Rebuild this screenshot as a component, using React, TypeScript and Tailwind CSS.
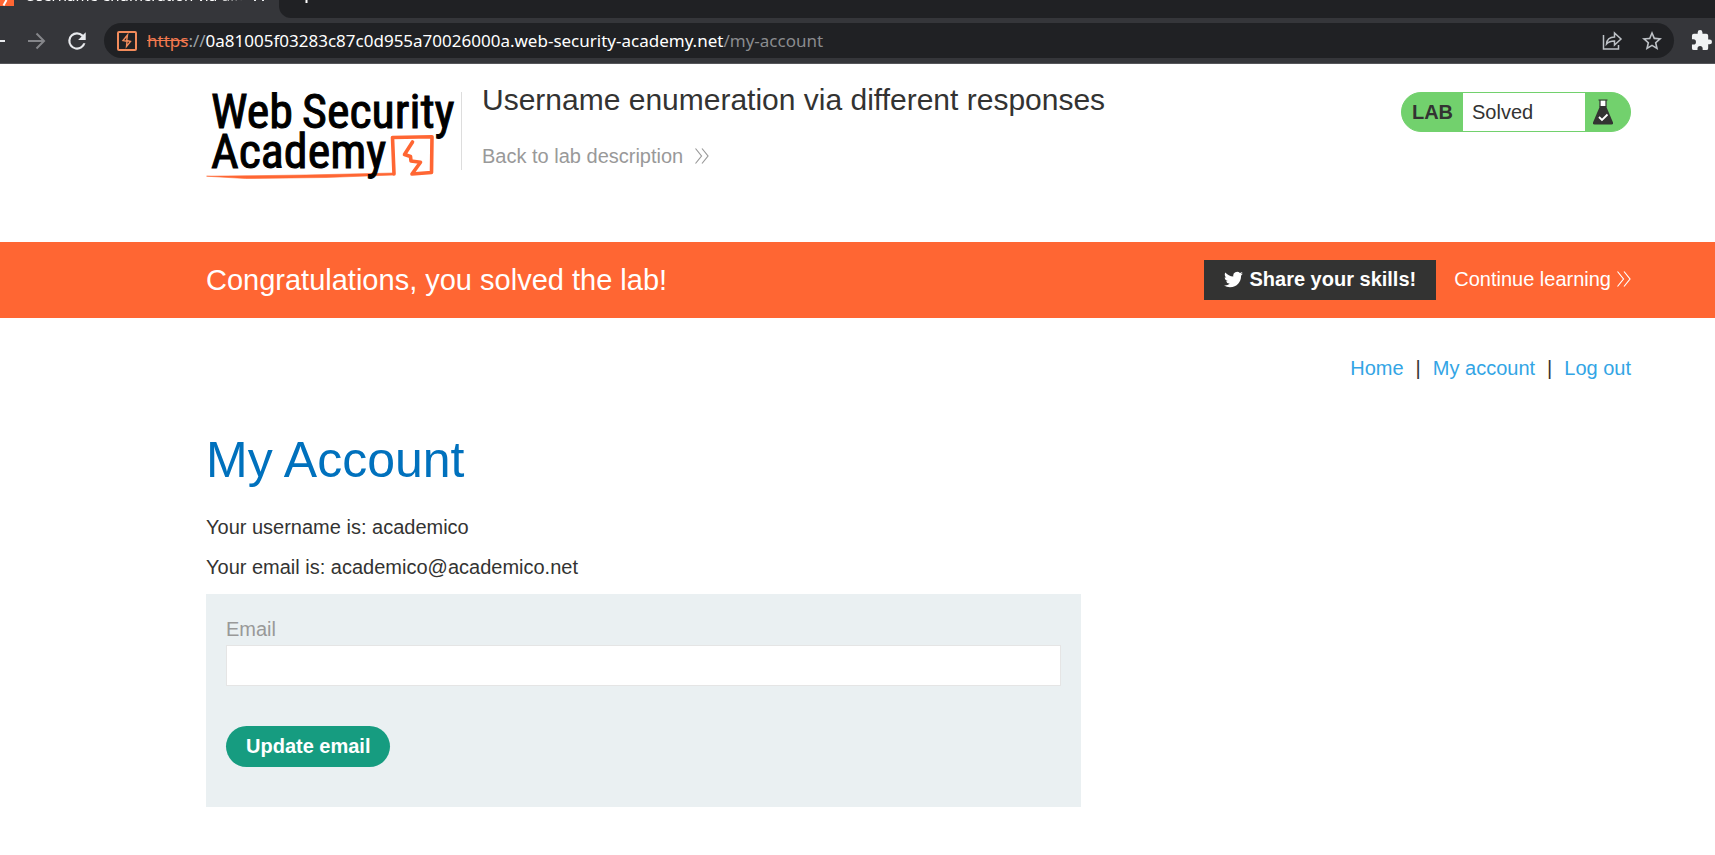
import { ReactNode } from "react";

function Chevrons({ className }: { className?: string }) {
  return (
    <svg className={className} width="14" height="18" viewBox="0 0 14 18" fill="none" stroke="currentColor" strokeWidth="1.2" aria-hidden="true">
      <path d="M.5 1.500 6.500 9l-6 7.500M7 1.500 13 9l-6 7.500" />
    </svg>
  );
}

function BrowserChrome() {
  return (
    <div className="bg-[#202124] font-['Noto_Sans','Open_Sans',sans-serif]">
      <div className="flex h-[18px] overflow-hidden bg-[#35363a]">
        <div className="flex w-[279px] items-end">
          <svg width="14" height="18" viewBox="0 0 14 18" aria-hidden="true" className="shrink-0">
            <path d="M0 0h14v6H0z" fill="#ff6633" />
            <path d="M6.500 0 3.500 5.500" stroke="#fff" strokeWidth="2" />
          </svg>
          <div className="relative h-[18px] flex-1">
            <span className="absolute bottom-[13px] left-[11px] w-[218px] overflow-hidden mask-r-from-90% text-[15px] leading-5 whitespace-nowrap text-white">
              Username enumeration via different responses
            </span>
            <svg className="absolute top-0 left-[240px]" width="12" height="2" viewBox="0 0 12 2" aria-hidden="true">
              <path d="M0 0h2v1H0zM8 0h2v1H8z" fill="#e8eaed" />
            </svg>
          </div>
        </div>
        <div className="flex-1 rounded-bl-[12px] bg-[#202124]">
          <svg width="50" height="18" viewBox="0 0 50 18" aria-hidden="true">
            <path d="M27.500 0v3" stroke="#fff" strokeWidth="2" />
          </svg>
        </div>
      </div>
      <div className="flex h-[46px] items-center border-b border-[#55565a] bg-[#35363a]">
        <button aria-label="Back" className="h-6 w-5">
          <svg width="20" height="24" viewBox="0 0 20 24" aria-hidden="true">
            <path d="M0 12h5" stroke="#e8eaed" strokeWidth="2" />
          </svg>
        </button>
        <button aria-label="Forward" className="ml-2 h-6 w-5">
          <svg width="20" height="24" viewBox="0 0 20 24" fill="none" stroke="#85868a" strokeWidth="2" aria-hidden="true">
            <path d="M0 12h15M8.500 4.500 16 12l-7.500 7.500" />
          </svg>
        </button>
        <button aria-label="Reload" className="ml-[17px] size-6">
          <svg width="24" height="24" viewBox="1 1 22 22" aria-hidden="true">
            <path d="M17.650 6.350A7.960 7.960 0 0 0 12 4a8 8 0 1 0 7.730 10h-2.080A6 6 0 1 1 12 6c1.660 0 3.140.69 4.220 1.780L13 11h7V4z" fill="#e8eaed" />
          </svg>
        </button>
        <div className="ml-[15px] flex h-[35px] flex-1 items-center rounded-full bg-[#202124] pr-[12px] pl-[13px]">
          <svg width="20" height="20" viewBox="0 0 20 20" fill="none" stroke="#f28b5b" aria-hidden="true" className="shrink-0">
            <rect x="1" y="1" width="18" height="18" rx="1" strokeWidth="2" />
            <path d="M10.500 4 6 9.500l4 .8-.5 5.200 4-5-3.800-1z" strokeWidth="1.400" />
          </svg>
          <p className="ml-[10px] flex-1 text-[17px] leading-6 whitespace-nowrap text-[#9aa0a6]">
            <span className="text-[#f2794f] line-through">https</span>://
            <span className="text-white">0a81005f03283c87c0d955a70026000a.web-security-academy.net</span>
            <span className="text-[#8a8b8e]">/my-account</span>
          </p>
          <button aria-label="Share this page">
            <svg width="22" height="22" viewBox="0 0 22 22" fill="none" stroke="#bdc1c6" strokeWidth="1.500" aria-hidden="true">
              <path d="M2.500 5v14h15v-4" />
              <path d="M5.500 14C6 9 9 7 13.500 7V3l6.500 6-6.500 6V11c-3.500 0-6 .8-8 3z" />
            </svg>
          </button>
          <button aria-label="Bookmark this page" className="ml-[19px]">
            <svg width="20" height="20" viewBox="2 2 20 20" fill="#bdc1c6" aria-hidden="true">
              <path d="m22 9.240-7.190-.62L12 2 9.190 8.630 2 9.240l5.460 4.730L5.820 21 12 17.270 18.180 21l-1.630-7.030zM12 15.400l-3.760 2.270 1-4.280-3.320-2.880 4.380-.38L12 6.100l1.710 4.040 4.380.38-3.320 2.880 1 4.280z" />
            </svg>
          </button>
        </div>
        <button aria-label="Extensions" className="mr-[3px] ml-[17px]">
          <svg width="21" height="21" viewBox="1 1 22 22" fill="#f1f3f4" aria-hidden="true">
            <path d="M20.500 11H19V7a2 2 0 0 0-2-2h-4V3.500a2.500 2.500 0 0 0-5 0V5H4a2 2 0 0 0-2 2v3.800h1.500a2.700 2.700 0 0 1 0 5.400H2V20a2 2 0 0 0 2 2h3.800v-1.500a2.700 2.700 0 0 1 5.400 0V22H17a2 2 0 0 0 2-2v-4h1.500a2.500 2.500 0 0 0 0-5z" />
          </svg>
        </button>
      </div>
    </div>
  );
}

function AcademyLogo() {
  return (
    <svg width="254" height="92" viewBox="0 0 254 92" role="img" aria-label="Web Security Academy" className="shrink-0">
      <g fill="none" stroke="#ff6633" strokeLinejoin="round" strokeLinecap="round">
        <path d="M1 84.200 40 83.800 100 83 188 81V83L120 85.500 40 86.500z" fill="#ff6633" strokeWidth=".6" />
        <path d="M188 82 186.500 45.500 226 44.800 225.500 80.500 206 82 214.500 70.200 205 69 204.500 64.500 198.500 62.500 206.500 50" strokeWidth="3.600" />
      </g>
      <g className="font-['Roboto_Condensed','Liberation_Sans_Narrow',sans-serif]" fontSize="48" fill="#000" stroke="#000" strokeWidth="1">
        <text x="5" y="36">Web</text>
        <text x="96" y="36">Security</text>
        <text x="5" y="76">Academy</text>
      </g>
    </svg>
  );
}

function LabStatus() {
  return (
    <div className="flex h-10 w-[230px] items-stretch overflow-hidden rounded-full border border-[#72d16d] bg-[#72d16d]">
      <span className="flex w-[61px] items-center justify-center font-bold">LAB</span>
      <span className="flex flex-1 items-center bg-white pl-[9px]">Solved</span>
      <span className="flex w-[45px] items-center pl-2">
        <svg width="20" height="26" viewBox="0 0 20 26" aria-hidden="true">
          <path d="M7 1.500h6v7H7z" fill="#fff" />
          <path d="M5.500 1h9M7 1v7M13 1v7" stroke="#333332" strokeWidth="1.200" />
          <path d="M7 7h6l7 16.500a1.600 1.600 0 0 1-1.500 2h-17A1.600 1.600 0 0 1 0 23.500z" fill="#333332" />
          <path d="m6 18 3 3 5.500-5.500" fill="none" stroke="#fff" strokeWidth="1.800" />
        </svg>
      </span>
    </div>
  );
}

function NavLink({ children }: { children: ReactNode }) {
  return <a href="#" className="text-[#33a5e5]">{children}</a>;
}

export default function App() {
  return (
    <div className="min-h-screen bg-white font-['Liberation_Sans',Arial,sans-serif] text-[20px] leading-[30px] text-[#333332]">
      <BrowserChrome />
      <header className="flex h-[178px] pr-[84px] pl-[206px]">
        <div className="pt-[28px]">
          <AcademyLogo />
        </div>
        <div className="mt-[28px] ml-px h-[78px] border-l border-[#dddddd]" />
        <div className="flex-1 pt-4 pl-5">
          <h2 className="text-[30px] leading-10">Username enumeration via different responses</h2>
          <a href="#" className="mt-[21px] flex items-center gap-3 text-[#999999]">
            Back to lab description
            <Chevrons />
          </a>
        </div>
        <div className="pt-[28px]">
          <LabStatus />
        </div>
      </header>

      <section className="flex h-[76px] items-center justify-between bg-[#ff6633] pr-[84px] pl-[206px] text-white">
        <h4 className="text-[29px] leading-10">Congratulations, you solved the lab!</h4>
        <div className="flex items-center">
          <button className="flex h-10 items-center gap-[6px] bg-[#333332] px-5 pb-[2px] font-bold">
            <svg width="19" height="17" viewBox="0 2 24 20" fill="currentColor" aria-hidden="true">
              <path d="M23.950 4.570a10 10 0 0 1-2.820.77 4.960 4.960 0 0 0 2.160-2.720c-.95.550-2 .95-3.130 1.180a4.920 4.920 0 0 0-8.380 4.480C7.690 8.090 4.070 6.130 1.640 3.160a4.820 4.820 0 0 0-.67 2.480c0 1.710.87 3.210 2.190 4.100a4.900 4.900 0 0 1-2.230-.62v.06a4.920 4.920 0 0 0 3.950 4.830 5 5 0 0 1-2.210.08 4.940 4.940 0 0 0 4.600 3.420A9.870 9.870 0 0 1 0 19.540a14 14 0 0 0 7.550 2.210c9.050 0 14-7.500 14-13.980 0-.21 0-.42-.02-.63a9.940 9.940 0 0 0 2.420-2.570z" />
            </svg>
            Share your skills!
          </button>
          <a href="#" className="ml-[18px] flex items-center gap-[6px] pb-[2px]">
            Continue learning
            <Chevrons />
          </a>
        </div>
      </section>

      <main className="pr-[84px] pl-[206px]">
        <nav className="flex justify-end gap-[12px] pt-[35px]">
          <NavLink>Home</NavLink>
          <span>|</span>
          <NavLink>My account</NavLink>
          <span>|</span>
          <NavLink>Log out</NavLink>
        </nav>
        <h1 className="mt-[47px] text-[50px] leading-[60px] text-[#0071bd]">My Account</h1>
        <p className="mt-[22px]">Your username is: academico</p>
        <p className="mt-[10px]">Your email is: academico@academico.net</p>
        <form className="mt-3 w-full max-w-[875px] bg-[#eaf0f2] px-5 pt-5 pb-10" onSubmit={(e) => e.preventDefault()}>
          <label htmlFor="email" className="block text-[#999999]">Email</label>
          <input id="email" type="email" className="mt-px block h-[41px] w-full border border-[#e5e5e5] bg-white px-2 outline-none" />
          <button type="submit" className="mt-10 h-[41px] rounded-full bg-[#169c80] px-5 pb-[2px] font-bold text-white">
            Update email
          </button>
        </form>
      </main>
    </div>
  );
}
